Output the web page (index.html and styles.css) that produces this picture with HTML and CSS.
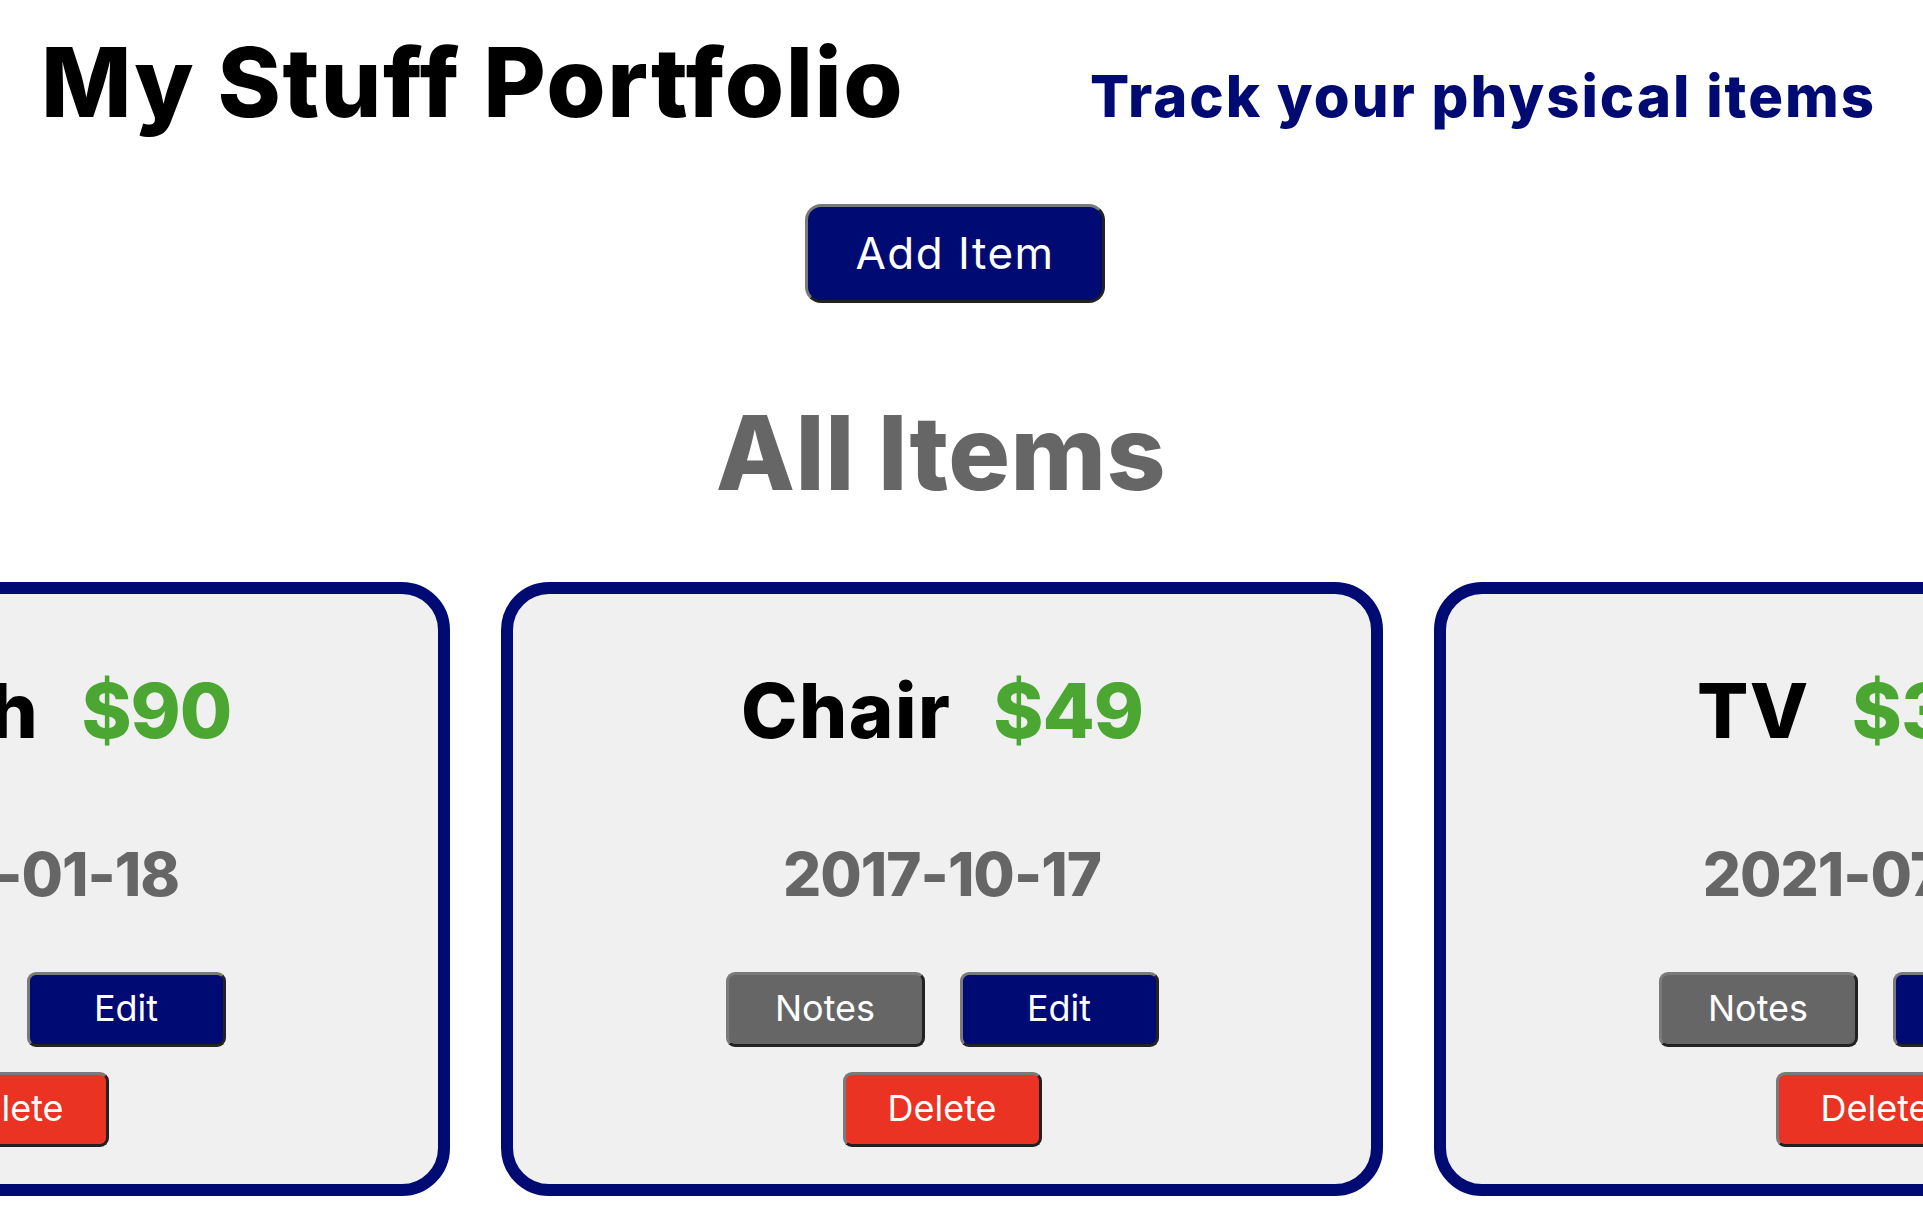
FILE: index.html
```html
<!DOCTYPE html>
<html lang="en">
<head>
<meta charset="utf-8">
<title>My Stuff Portfolio</title>
<link rel="stylesheet" href="styles.css">
</head>
<body>
  <header class="site-header">
    <h1 class="site-title">My Stuff Portfolio</h1>
    <p class="site-tagline">Track your physical items</p>
  </header>

  <div class="add-row">
    <button class="btn btn-add" type="button">Add Item</button>
  </div>

  <h2 class="section-title">All Items</h2>

  <div class="carousel">
    <div class="carousel-track">
      <article class="item-card">
        <div class="item-head">
          <span class="item-name">Couch</span>
          <span class="item-price">$90</span>
        </div>
        <div class="item-date">2020-01-18</div>
        <div class="item-actions">
          <button class="btn btn-small btn-notes" type="button">Notes</button>
          <button class="btn btn-small btn-edit" type="button">Edit</button>
          <button class="btn btn-small btn-delete" type="button">Delete</button>
        </div>
      </article>

      <article class="item-card">
        <div class="item-head">
          <span class="item-name">Chair</span>
          <span class="item-price">$49</span>
        </div>
        <div class="item-date">2017-10-17</div>
        <div class="item-actions">
          <button class="btn btn-small btn-notes" type="button">Notes</button>
          <button class="btn btn-small btn-edit" type="button">Edit</button>
          <button class="btn btn-small btn-delete" type="button">Delete</button>
        </div>
      </article>

      <article class="item-card">
        <div class="item-head">
          <span class="item-name">TV</span>
          <span class="item-price">$300</span>
        </div>
        <div class="item-date">2021-07-24</div>
        <div class="item-actions">
          <button class="btn btn-small btn-notes" type="button">Notes</button>
          <button class="btn btn-small btn-edit" type="button">Edit</button>
          <button class="btn btn-small btn-delete" type="button">Delete</button>
        </div>
      </article>
    </div>
  </div>
</body>
</html>
```

FILE: styles.css
```css
html, body {
  margin: 0;
  padding: 0;
  background: #ffffff;
  overflow: hidden;
}

body {
  font-family: Inter, "Liberation Sans", Arial, sans-serif;
  color: #000;
  width: 1923px;
  height: 1229px;
}

.site-header {
  display: flex;
  justify-content: space-between;
  align-items: baseline;
  padding: 34px 47px 0 41px;
}

.site-title {
  margin: 0;
  font-size: 96px;
  line-height: 96px;
  font-weight: 800;
  letter-spacing: 1.5px;
  color: #000;
}

.site-tagline {
  margin: 0;
  font-size: 58px;
  line-height: 58px;
  font-weight: 800;
  letter-spacing: 2px;
  color: #000a73;
}

.add-row {
  display: flex;
  justify-content: center;
  padding-right: 13px;
  margin-top: 74px;
}

.btn {
  font-family: Inter, "Liberation Sans", Arial, sans-serif;
  color: #fff;
  font-weight: 400;
  border-style: solid;
  border-width: 3px;
  border-color: #7a7a7a #222 #222 #7a7a7a;
  box-sizing: border-box;
  padding: 0;
  cursor: pointer;
}

.btn-add {
  width: 300px;
  height: 99px;
  font-size: 44px;
  line-height: 93px;
  letter-spacing: 1.5px;
  border-radius: 16px;
  background: #000a73;
}

.section-title {
  margin: 98px 0 0;
  padding-right: 41px;
  text-align: center;
  font-size: 103px;
  line-height: 103px;
  font-weight: 800;
  letter-spacing: 0.5px;
  color: #666;
}

.carousel {
  margin-top: 78px;
  padding-right: 39px;
}

.carousel-track {
  display: flex;
  justify-content: center;
  gap: 51px;
}

.item-card {
  flex: 0 0 882px;
  box-sizing: border-box;
  height: 614px;
  border: 12px solid #000a73;
  border-radius: 48px;
  background: #f0f0f0;
  padding-top: 78px;
  display: flex;
  flex-direction: column;
  align-items: center;
}

.item-head {
  display: flex;
  gap: 42px;
  font-size: 76px;
  line-height: 76px;
  font-weight: 800;
}

.item-name {
  color: #000;
  letter-spacing: 1.5px;
}

.item-price {
  color: #4ba632;
  letter-spacing: -1px;
}

.item-date {
  margin-top: 96px;
  font-size: 60px;
  line-height: 60px;
  font-weight: 800;
  letter-spacing: -1px;
  color: #666;
}

.item-actions {
  margin-top: 68px;
  width: 433px;
  display: flex;
  flex-wrap: wrap;
  justify-content: center;
  gap: 25px 35px;
}

.btn-small {
  width: 199px;
  height: 75px;
  font-size: 36px;
  line-height: 66px;
  padding-bottom: 3px;
  border-radius: 9px;
}

.btn-notes {
  background: #666;
}

.btn-edit {
  background: #000a73;
}

.btn-delete {
  background: #ea3323;
}
```
